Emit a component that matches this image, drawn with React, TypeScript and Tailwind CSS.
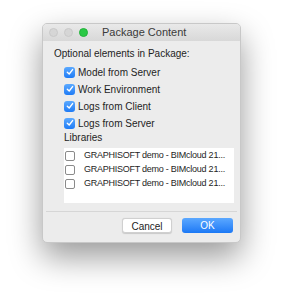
function Check({ checked }: { checked: boolean }) {
  if (checked) {
    return (
      <span className="flex h-[11px] w-[11px] shrink-0 items-center justify-center rounded-[3px] bg-gradient-to-b from-[#5aa9ff] to-[#1d7bf5]">
        <svg width="8" height="8" viewBox="0 0 8 8">
          <path d="M1.3 4.2 L3.2 6 L6.6 1.6" fill="none" stroke="white" strokeWidth="1.4" strokeLinecap="round" strokeLinejoin="round" />
        </svg>
      </span>
    );
  }
  return <span className="block h-[10px] w-[10px] shrink-0 rounded-[2px] border border-[#8a8a8a] bg-white" />;
}

const options = ['Model from Server', 'Work Environment', 'Logs from Client', 'Logs from Server'];
const libraries = [
  'GRAPHISOFT demo - BIMcloud 21...',
  'GRAPHISOFT demo - BIMcloud 21...',
  'GRAPHISOFT demo - BIMcloud 21...',
];

export default function App() {
  return (
    <div className="h-[300px] w-[282px] bg-white pl-[42px] pt-[23px] font-['Liberation_Sans',sans-serif] text-[#1e1e1e]">
      <div className="w-[199px] overflow-hidden rounded-[5px] border border-[#c8c8c8] bg-[#ececec] shadow-[0_14px_32px_rgba(0,0,0,0.4)]">
        <div className="flex h-[17px] items-center bg-gradient-to-b from-[#e9e9e9] to-[#d8d8d8] pl-[6px]">
          <span className="h-[9px] w-[9px] rounded-full border border-[#c9c9c9] bg-[#d6d6d6]" />
          <span className="ml-[6px] h-[9px] w-[9px] rounded-full border border-[#c9c9c9] bg-[#d6d6d6]" />
          <span className="ml-[6px] h-[9px] w-[9px] rounded-full border border-[#22b33a] bg-[#2ac845]" />
          <span className="ml-[14px] text-[11px] text-[#3a3a3a]">Package Content</span>
        </div>
        <div className="px-[11px] pt-[7px] text-[10px]">
          <div className="leading-[12px]">Optional elements in Package:</div>
          <div className="mt-[6px] flex flex-col gap-[5px] pl-[10px]">
            {options.map((o) => (
              <div key={o} className="flex h-[12px] items-center gap-[3px]">
                <Check checked />
                <span>{o}</span>
              </div>
            ))}
          </div>
          <div className="mt-[3px] pl-[10px] leading-[12px]">Libraries</div>
          <div className="ml-[10px] mt-[4px] h-[55px] w-[170px] bg-white pt-[1px]">
            {libraries.map((l, i) => (
              <div key={i} className="flex h-[14px] items-center">
                <span className="ml-[1px] block">
                  <Check checked={false} />
                </span>
                <span className="ml-[9px] whitespace-nowrap text-[9px] tracking-[-0.25px]">{l}</span>
              </div>
            ))}
          </div>
        </div>
        <div className="mx-[3px] mt-[8px] border-t border-[#d6d6d6]" />
        <div className="flex justify-end gap-[10px] px-[7px] pb-[9px] pt-[6px] text-[10px]">
          <button className="h-[15px] w-[50px] rounded-[3px] border border-[#d0d0d0] bg-white text-[#222] shadow-[0_0.5px_1px_rgba(0,0,0,0.15)]">
            Cancel
          </button>
          <button className="h-[15px] w-[51px] rounded-[3px] bg-gradient-to-b from-[#5ba8ff] to-[#1a78f5] text-white">
            OK
          </button>
        </div>
      </div>
    </div>
  );
}
